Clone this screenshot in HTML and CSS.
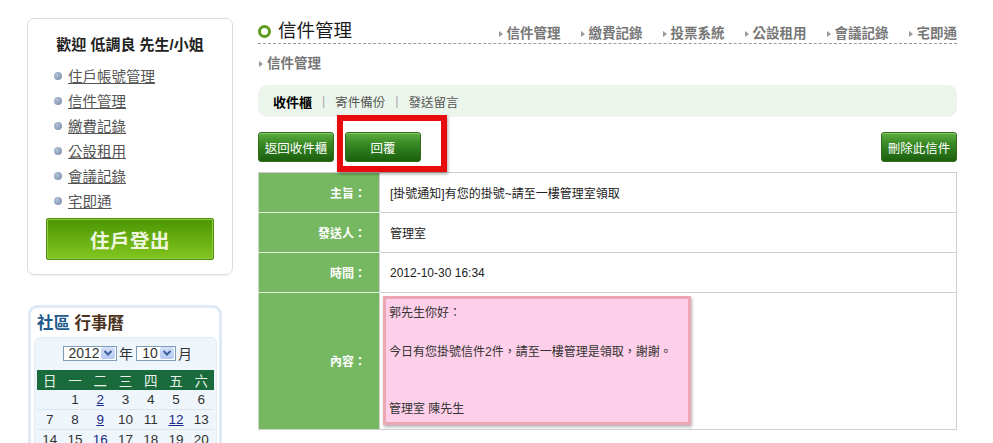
FILE: index.html
```html
<!DOCTYPE html>
<html lang="zh-Hant">
<head>
<meta charset="utf-8">
<title>信件管理</title>
<link rel="stylesheet" href="styles.css">
</head>
<body>
<div class="page">
  <aside class="sidebar">
    <div class="welcome">
      <div class="welcome-title">歡迎 低調良 先生/小姐</div>
      <ul class="side-menu">
        <li><a href="#">住戶帳號管理</a></li>
        <li><a href="#">信件管理</a></li>
        <li><a href="#">繳費記錄</a></li>
        <li><a href="#">公設租用</a></li>
        <li><a href="#">會議記錄</a></li>
        <li><a href="#">宅即通</a></li>
      </ul>
      <a class="logout" href="#">住戶登出</a>
    </div>
    <div class="calendar">
      <div class="cal-title"><span class="cal-blue">社區</span> 行事曆</div>
      <div class="cal-inner">
        <div class="cal-selects">
          <span class="fake-select sel-year"><span class="sel-val">2012</span><span class="sel-btn"><svg width="10" height="8" viewBox="0 0 10 8"><path d="M1.5 2 L5 5.5 L8.5 2" fill="none" stroke="#3d5c9c" stroke-width="2"/></svg></span></span>
          <span class="sel-label">年</span>
          <span class="fake-select sel-month"><span class="sel-val">10</span><span class="sel-btn"><svg width="10" height="8" viewBox="0 0 10 8"><path d="M1.5 2 L5 5.5 L8.5 2" fill="none" stroke="#3d5c9c" stroke-width="2"/></svg></span></span>
          <span class="sel-label">月</span>
        </div>
        <table class="cal-table">
          <thead>
            <tr><th>日</th><th>一</th><th>二</th><th>三</th><th>四</th><th>五</th><th>六</th></tr>
          </thead>
          <tbody>
            <tr><td></td><td>1</td><td><a href="#">2</a></td><td>3</td><td>4</td><td>5</td><td>6</td></tr>
            <tr><td>7</td><td>8</td><td><a href="#">9</a></td><td>10</td><td>11</td><td><a href="#">12</a></td><td>13</td></tr>
            <tr><td>14</td><td>15</td><td><a href="#">16</a></td><td>17</td><td>18</td><td>19</td><td>20</td></tr>
          </tbody>
        </table>
      </div>
    </div>
  </aside>

  <main class="main">
    <div class="main-head">
      <h1 class="page-title"><span class="ring"></span>信件管理</h1>
      <nav class="top-nav">
        <a href="#">信件管理</a>
        <a href="#">繳費記錄</a>
        <a href="#">投票系統</a>
        <a href="#">公設租用</a>
        <a href="#">會議記錄</a>
        <a href="#">宅即通</a>
      </nav>
    </div>
    <div class="crumb">信件管理</div>
    <div class="tabs">
      <span class="tab active">收件櫃</span>
      <span class="sep">|</span>
      <span class="tab">寄件備份</span>
      <span class="sep">|</span>
      <span class="tab">發送留言</span>
    </div>
    <div class="actions">
      <a class="btn" href="#">返回收件櫃</a>
      <span class="highlight-wrap"><a class="btn btn-reply" href="#">回覆</a><span class="highlight"></span></span>
      <a class="btn btn-right" href="#">刪除此信件</a>
    </div>
    <table class="mail">
      <tr><th>主旨：</th><td>[掛號通知]有您的掛號~請至一樓管理室領取</td></tr>
      <tr><th>發送人：</th><td>管理室</td></tr>
      <tr><th>時間：</th><td>2012-10-30 16:34</td></tr>
      <tr class="content-row"><th>內容：</th><td>
        <div class="note">郭先生你好：<br><br>今日有您掛號信件2件，請至一樓管理是領取，謝謝。<br><br><br>管理室 陳先生</div>
      </td></tr>
    </table>
  </main>
</div>
</body>
</html>
```

FILE: styles.css
```css
html { overflow: hidden; }
body {
  margin: 0;
  background: #fff;
  font-family: "Liberation Sans", "Noto Sans CJK TC", sans-serif;
  font-size: 12px;
  color: #222;
}
a { color: inherit; }

.page {
  display: flex;
  align-items: flex-start;
  gap: 25px;
  padding: 18px 0 0 27px;
}

/* ---------- sidebar ---------- */
.sidebar {
  width: 206px;
  display: flex;
  flex-direction: column;
  gap: 30px;
}
.welcome {
  border: 1px solid #dcdcdc;
  border-radius: 7px;
  padding: 15px 18px 14px 18px;
  box-shadow: 0 1px 1px rgba(0,0,0,0.05);
}
.welcome-title {
  text-align: center;
  font-size: 15px;
  font-weight: bold;
  color: #222;
  line-height: 22px;
}
.side-menu {
  list-style: none;
  margin: 7px 0 5px 0;
  padding: 0 0 0 8px;
}
.side-menu li {
  display: flex;
  align-items: center;
  height: 25px;
  font-size: 14.5px;
}
.side-menu li::before {
  content: "";
  width: 8px;
  height: 8px;
  border-radius: 50%;
  background: radial-gradient(circle at 35% 35%, #b4c2d6, #7489a8);
  margin-right: 6px;
  flex: none;
}
.side-menu a {
  color: #555;
  text-decoration: underline;
}
.logout {
  display: flex;
  align-items: center;
  justify-content: center;
  height: 40px;
  border: 1px solid #4f8f0c;
  box-shadow: inset 0 0 0 1px #8fcb48;
  border-radius: 2px;
  background: linear-gradient(#4b9603, #6cb313 60%, #82c51f);
  color: #eef6de;
  font-size: 19.5px;
  font-weight: bold;
  text-decoration: none;
  letter-spacing: 0.5px;
}

.calendar {
  width: 183px;
  margin-left: 1px;
  border: 3px solid #deebf6;
  border-radius: 9px;
  padding: 4px 2px 6px 3px;
}
.cal-title {
  font-size: 16.5px;
  font-weight: bold;
  color: #4a3220;
  line-height: 22px;
  padding-left: 3px;
}
.cal-blue { color: #1f5b8c; }
.cal-inner {
  margin-top: 3px;
  background: #eef5fb;
  border: 1px solid #e1ecf6;
  border-radius: 6px;
  padding: 7px 2px 4px 2px;
}
.cal-selects {
  display: flex;
  align-items: center;
  justify-content: center;
  height: 16px;
  gap: 2px;
  font-size: 14px;
  color: #333;
  padding-left: 4px;
}
.fake-select {
  display: flex;
  align-items: center;
  height: 15px;
  border: 1px solid #7f9db9;
  background: #fff;
  padding: 0 1px 0 3px;
  box-sizing: border-box;
}
.sel-year { width: 54px; }
.sel-month { width: 40px; margin-left: 1px; }
.sel-val { flex: 1; text-align: center; font-size: 14px; line-height: 15px; }
.sel-btn {
  width: 14px;
  height: 12px;
  display: flex;
  align-items: center;
  justify-content: center;
  background: linear-gradient(#d3e0fb, #b5c9f3);
  border-radius: 2px;
}
.cal-table {
  margin-top: 9px;
  width: 100%;
  border-collapse: collapse;
  font-size: 13.5px;
  color: #333;
}
.cal-table th {
  background: #1a6b3c;
  color: #e8f2ea;
  font-weight: normal;
  height: 19px;
  padding: 0;
  width: 14.28%;
}
.cal-table td {
  text-align: center;
  height: 19px;
  padding: 0;
  border-bottom: 1px solid #dde6ee;
}
.cal-table td a { color: #1b2a8a; }

/* ---------- main ---------- */
.main {
  width: 699px;
  padding-top: 1px;
}
.main-head {
  display: flex;
  justify-content: space-between;
  align-items: flex-end;
  border-bottom: 1px dashed #9a9a9a;
  height: 24px;
}
.page-title {
  margin: 0;
  display: flex;
  align-items: center;
  font-size: 18.5px;
  font-weight: normal;
  color: #1a1a1a;
  line-height: 24px;
}
.ring {
  width: 7px;
  height: 7px;
  border: 3px solid #5d9b1c;
  border-radius: 50%;
  margin-right: 7px;
}
.top-nav {
  display: flex;
  gap: 20px;
  padding-bottom: 0;
}
.top-nav a,
.crumb {
  display: flex;
  align-items: center;
  font-size: 13.5px;
  font-weight: bold;
  color: #777;
  text-decoration: none;
  line-height: 18px;
}
.top-nav a::before,
.crumb::before {
  content: "";
  border-left: 4px solid #999;
  border-top: 3px solid transparent;
  border-bottom: 3px solid transparent;
  margin-right: 4px;
}
.crumb {
  margin-top: 10px;
  height: 20px;
  padding-left: 1px;
}
.tabs {
  margin-top: 11px;
  height: 32px;
  background: #ebf5eb;
  border-radius: 9px;
  display: flex;
  align-items: center;
  padding-left: 15px;
  font-size: 12.5px;
  color: #555;
}
.tab.active { color: #000; font-weight: bold; font-size: 13px; }
.sep { color: #aaa; margin: 0 10px; }

.actions {
  display: flex;
  align-items: center;
  gap: 11px;
  margin-top: 15px;
  height: 30px;
}
.btn {
  display: flex;
  align-items: center;
  justify-content: center;
  width: 74px;
  height: 28px;
  border: 1px solid #2f6d1c;
  border-radius: 3px;
  background: linear-gradient(#5fae44 0%, #3b8c25 35%, #28741a 70%, #1c5f0e 100%);
  box-shadow: inset 0 1px 0 #86c76a;
  color: #fff;
  font-size: 12.5px;
  text-decoration: none;
}
.btn-right { margin-left: auto; }
.highlight-wrap { position: relative; display: flex; }
.highlight {
  position: absolute;
  left: -8px;
  top: -17px;
  right: -26px;
  bottom: -10px;
  border: 6px solid #e80b0b;
  box-shadow: 1px 2px 3px rgba(0,0,0,0.35);
}

.mail {
  margin-top: 10px;
  width: 100%;
  border-collapse: collapse;
  border: 1px solid #cfcfcf;
}
.mail th {
  width: 107px;
  background: #76b862;
  color: #fff;
  text-align: right;
  font-weight: bold;
  font-size: 12px;
  padding: 0 13px 0 0;
  height: 39px;
  border-bottom: 1px solid #e3f0dd;
}
.mail td {
  padding: 0 0 0 10px;
  font-size: 12px;
  color: #222;
  border-bottom: 1px solid #cfcfcf;
  border-left: 1px solid #cfcfcf;
}
.content-row th { height: 134px; border-bottom: 1px solid #cfcfcf; }
.content-row td { padding: 3px 0 4px 3px; vertical-align: top; }
.note {
  width: 299px;
  background: #fdcfe8;
  border: 3px solid #eba7b3;
  box-shadow: 1px 2px 3px rgba(0,0,0,0.3);
  padding: 5px 0 2px 3px;
  line-height: 19.3px;
  font-size: 12px;
  color: #333;
}
```
